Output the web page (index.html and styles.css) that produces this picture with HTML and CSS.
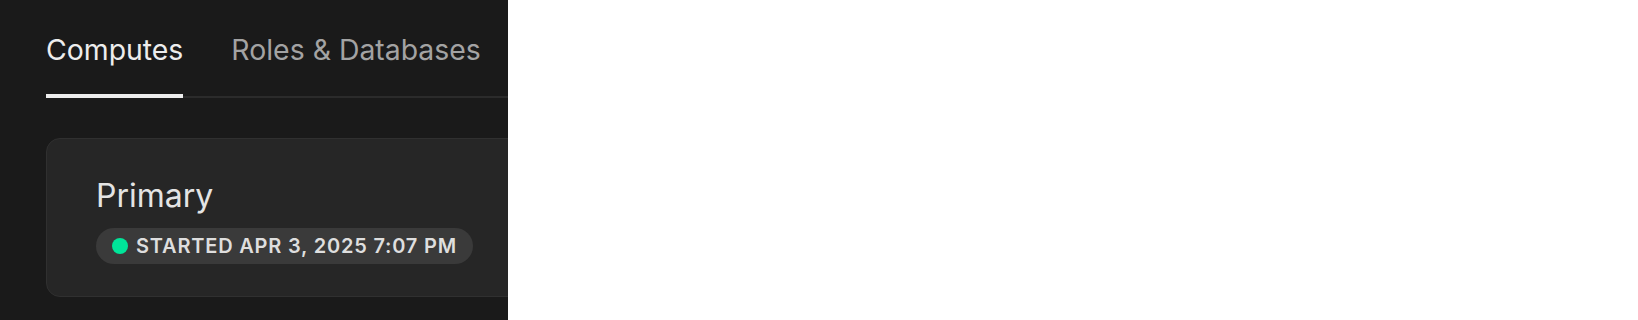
FILE: index.html
```html
<!DOCTYPE html>
<html lang="en">
  <head>
    <meta charset="UTF-8" />
    <meta name="viewport" content="width=device-width, initial-scale=1.0" />
    <title>Branch computes</title>
    <link rel="stylesheet" href="styles.css">
  </head>
  <body>
    <div class="panel">
      <div class="tabs">
        <div class="tab active">Computes</div>
        <div class="tab">Roles &amp; Databases</div>
      </div>
      <div class="compute-card">
        <div class="compute-name">Primary</div>
        <div class="status-badge">
          <span class="status-dot"></span>
          <span class="status-text">Started Apr 3, 2025 7:07 PM</span>
        </div>
      </div>
    </div>
  </body>
</html>
```

FILE: styles.css
```css
body {
  margin: 0;
  padding: 0;
  background-color: #fff;
  font-family: Inter, "Noto Sans", Arial, sans-serif;
}

.panel {
  width: 508px;
  height: 320px;
  background-color: #1a1a1a;
  overflow: hidden;
  padding-left: 46px;
  box-sizing: border-box;
}

.tabs {
  display: flex;
  gap: 48px;
  padding-top: 30px;
  border-bottom: 2px solid #2b2b2b;
  margin-right: -1px;
}

.tab {
  font-size: 28.4px;
  line-height: 40px;
  color: #a3a3a3;
  padding-bottom: 24px;
  margin-bottom: -2px;
  border-bottom: 4px solid transparent;
  cursor: pointer;
}

.tab.active {
  color: #ededed;
  border-bottom-color: #ededed;
}

.compute-card {
  margin-top: 40px;
  width: 600px;
  height: 159px;
  box-sizing: border-box;
  background-color: #262626;
  border: 1px solid #303030;
  border-radius: 14px;
  padding: 37px 49px 0;
}

.compute-name {
  font-size: 32px;
  line-height: 40px;
  color: #e4e4e4;
}

.status-badge {
  display: inline-flex;
  align-items: center;
  gap: 8px;
  margin-top: 12px;
  height: 36px;
  padding: 0 16px;
  border-radius: 18px;
  background-color: #3a3a3a;
}

.status-dot {
  width: 16px;
  height: 16px;
  border-radius: 50%;
  background-color: #00e599;
}

.status-text {
  font-size: 20px;
  font-weight: 600;
  letter-spacing: 0.04em;
  text-transform: uppercase;
  color: #dedede;
}
```
